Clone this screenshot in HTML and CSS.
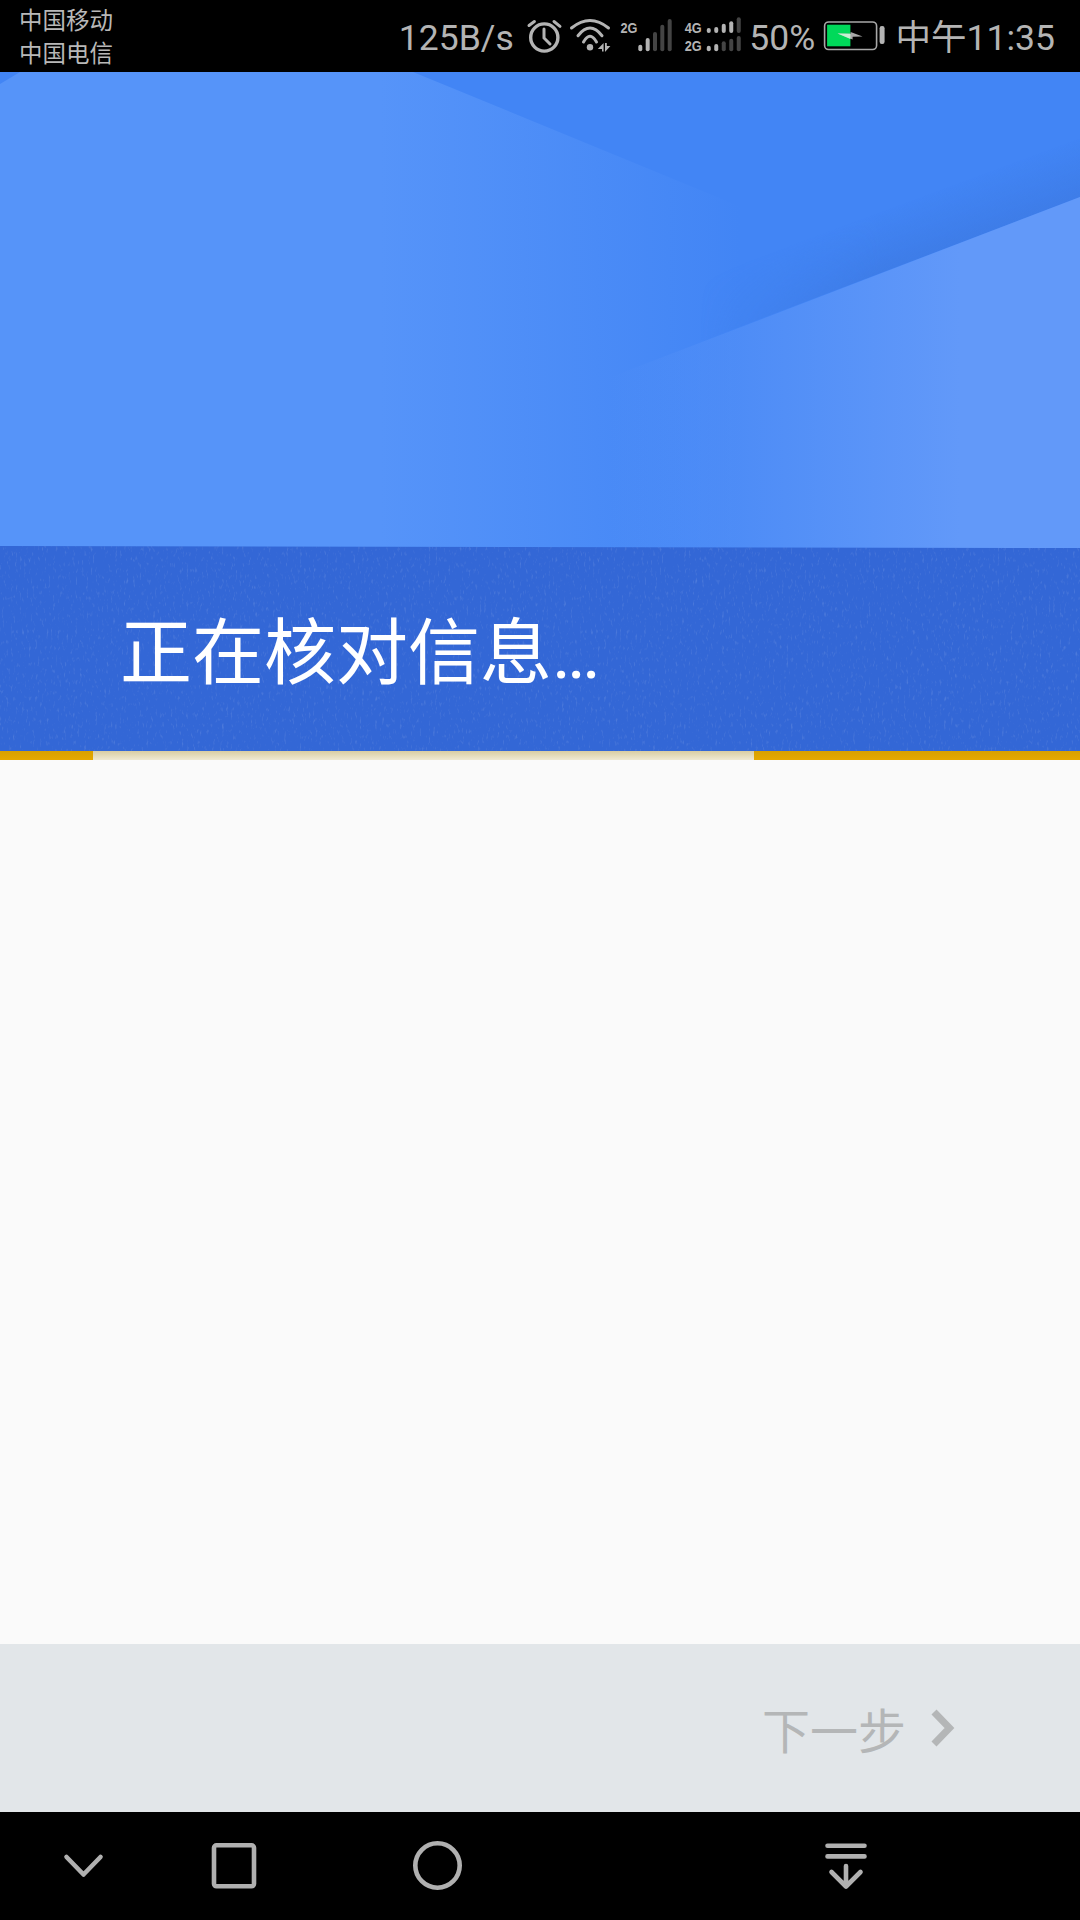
FILE: index.html
```html
<!DOCTYPE html>
<html lang="zh-CN">
<head>
<meta charset="utf-8">
<title>正在核对信息</title>
<link rel="stylesheet" href="styles.css">
</head>
<body>
<div class="screen">
  <header class="status">
    <div class="carriers">
      <span>中国移动</span>
      <span>中国电信</span>
    </div>
    <div class="status-right">
      <span class="status-text">125B/s</span>
      <svg class="ic-alarm" viewBox="517 8 51 56" aria-hidden="true">
        <circle cx="545.3" cy="37.5" r="13.6" class="line l34"/>
        <path d="M545 29v9l6 6" class="line l3"/>
        <path d="M530 25.5l5.4-4M555 21.5l6 4.8" class="line l3"/>
      </svg>
      <svg class="ic-wifi" viewBox="570 8 48 56" aria-hidden="true">
        <path d="M572.5 28Q591 13 609.5 28" class="line l3"/>
        <path d="M579 35.7Q591 20.5 603 35.7" class="line l3"/>
        <path d="M584.5 42Q591 30.5 597.5 42" class="line l3"/>
        <circle cx="591" cy="47.3" r="3.2" class="solid"/>
        <path d="M604.6 43v8.4h-1.6v-2.4h-4.2z" class="solid"/>
        <path d="M606 43h1.8v3h3.6l-5.4 6z" class="solid"/>
      </svg>
      <svg class="ic-sim1" viewBox="620 8 62 56" aria-hidden="true">
        <text x="621.5" y="33" class="net" textLength="17" lengthAdjust="spacingAndGlyphs">2G</text>
        <rect x="639.3" y="44.7" width="4" height="6.6" rx="2" class="solid"/>
        <rect x="646.7" y="38" width="4" height="13.3" rx="2" class="solid"/>
        <rect x="654" y="32" width="4" height="19.3" rx="2" class="off"/>
        <rect x="661.3" y="24.7" width="4" height="26.6" rx="2" class="off"/>
        <rect x="668.7" y="19" width="4" height="32.3" rx="2" class="off"/>
      </svg>
      <svg class="ic-sim2" viewBox="684 8 64 56" aria-hidden="true">
        <text x="685.5" y="33" class="net" textLength="17" lengthAdjust="spacingAndGlyphs">4G</text>
        <text x="685.5" y="50.6" class="net" textLength="17" lengthAdjust="spacingAndGlyphs">2G</text>
        <rect x="707.5" y="28" width="4" height="5" rx="2" class="solid"/>
        <rect x="715" y="27" width="4" height="6" rx="2" class="solid"/>
        <rect x="722.5" y="23.7" width="4" height="9.3" rx="2" class="solid"/>
        <rect x="730" y="21.3" width="4" height="11.7" rx="2" class="solid"/>
        <rect x="737.5" y="17.3" width="4" height="15.7" rx="2" class="off"/>
        <rect x="707.5" y="45.7" width="4" height="5.6" rx="2" class="solid"/>
        <rect x="715" y="44" width="4" height="7.3" rx="2" class="solid"/>
        <rect x="722.5" y="41.3" width="4" height="10" rx="2" class="off"/>
        <rect x="730" y="38.7" width="4" height="12.6" rx="2" class="off"/>
        <rect x="737.5" y="36" width="4" height="15.3" rx="2" class="off"/>
      </svg>
      <span class="status-text">50%</span>
      <svg class="ic-batt" viewBox="817.4 8 76.4 56" aria-hidden="true">
        <rect x="825" y="22" width="52" height="27.5" rx="4" class="batt-shell"/>
        <rect x="827.5" y="24.7" width="23.3" height="21.6" class="batt-fill"/>
        <path d="M838 33.5l13 0.2 0-1.7 12 4.4-10 0.3 0 2.8z" class="batt-bolt"/>
        <path d="M838 33.5l12.8 0.2 0 5.4z" class="batt-bolt-on"/>
        <rect x="880" y="26" width="5" height="18" rx="2.2" class="solid"/>
      </svg>
      <span class="status-text">中午11:35</span>
    </div>
  </header>

  <section class="hero">
    <svg class="hero-art" viewBox="0 0 1080 476" preserveAspectRatio="none" aria-hidden="true">
      <defs>
        <linearGradient id="leftFade" gradientUnits="userSpaceOnUse" x1="380" y1="0" x2="740" y2="0">
          <stop offset="0" stop-color="#5694f9"/>
          <stop offset="1" stop-color="#4285f5"/>
        </linearGradient>
        <linearGradient id="edgeShade" gradientUnits="userSpaceOnUse" x1="900" y1="194" x2="880" y2="140">
          <stop offset="0" stop-color="#3870d4" stop-opacity=".4"/>
          <stop offset="1" stop-color="#3870d4" stop-opacity="0"/>
        </linearGradient>
        <linearGradient id="shadeSpan" gradientUnits="userSpaceOnUse" x1="700" y1="0" x2="880" y2="0">
          <stop offset="0" stop-color="#000"/>
          <stop offset="1" stop-color="#fff"/>
        </linearGradient>
        <mask id="shadeMask" maskUnits="userSpaceOnUse" x="0" y="0" width="1080" height="476">
          <rect width="1080" height="476" fill="url(#shadeSpan)"/>
        </mask>
        <linearGradient id="rightFade" gradientUnits="userSpaceOnUse" x1="610" y1="0" x2="960" y2="0">
          <stop offset="0" stop-color="#6299f9" stop-opacity="0"/>
          <stop offset="1" stop-color="#6299f9"/>
        </linearGradient>
      </defs>
      <rect width="1080" height="476" fill="#4285f5"/>
      <polygon points="0,0 413,0 1080,274 1080,476 0,476" fill="url(#leftFade)"/>
      <polygon points="0,0 20,0 0,12" fill="#4285f5"/>
      <polygon points="700,270 1080,125 1080,0 700,0" fill="url(#edgeShade)" mask="url(#shadeMask)"/>
      <polygon points="540,332 1080,125 1080,476 540,476" fill="url(#rightFade)"/>
    </svg>
  </section>

  <section class="band">
    <svg class="grain" aria-hidden="true">
      <filter id="speck">
        <feTurbulence type="fractalNoise" baseFrequency="0.45 0.18" numOctaves="2" seed="4"/>
        <feColorMatrix values="0 0 0 0 1  0 0 0 0 1  0 0 0 0 1  0 0 0 2.4 -1.4"/>
      </filter>
      <rect width="100%" height="100%" filter="url(#speck)"/>
    </svg>
    <h1 class="title">正在核对信息<span class="dots">...</span></h1>
  </section>

  <div class="progress">
    <span class="seg-start"></span>
    <span class="seg-track"></span>
    <span class="seg-end"></span>
  </div>

  <main class="content"></main>

  <footer class="footer">
    <span class="next">下一步</span>
    <svg class="next-arrow" viewBox="926 1704 32 48" aria-hidden="true">
      <path d="M935 1712l15.5 16-15.5 16" class="next-stroke"/>
    </svg>
  </footer>

  <nav class="navbar">
    <svg class="nav-back" viewBox="63 1845 42 42" aria-hidden="true">
      <path d="M66.5 1857l17 17.5 17-17.5" class="nav-stroke"/>
    </svg>
    <svg class="nav-recent" viewBox="209 1841 50 50" aria-hidden="true">
      <rect x="214" y="1845.3" width="40" height="41" rx="2.5" class="nav-stroke"/>
    </svg>
    <svg class="nav-home" viewBox="411 1839 54 54" aria-hidden="true">
      <circle cx="437.5" cy="1865.5" r="22.2" class="nav-stroke"/>
    </svg>
    <svg class="nav-down" viewBox="824 1841 44 50" aria-hidden="true">
      <path d="M827.5 1845.7h37M827.5 1856.4h37M846 1866v20M831.5 1872l14.5 14.5 14.5-14.5" class="nav-stroke"/>
    </svg>
  </nav>
</div>
</body>
</html>
```
FILE: styles.css
```css
* { box-sizing: border-box; }
html, body { margin: 0; padding: 0; }
body {
  width: 1080px;
  height: 1920px;
  overflow: hidden;
  font-family: Roboto, "Noto Sans CJK SC", sans-serif;
}
.screen {
  width: 1080px;
  height: 1920px;
  display: flex;
  flex-direction: column;
  background: #fafafa;
}

/* status bar */
.status {
  height: 72px;
  flex: none;
  background: #000;
  display: flex;
  align-items: center;
  justify-content: space-between;
  padding: 0 25px 0 19px;
}
.carriers {
  display: flex;
  flex-direction: column;
  font-size: 23.5px;
  line-height: 33px;
  padding-top: 3px;
  color: #b8b8b8;
}
.status-right {
  display: flex;
  align-items: center;
  gap: 2px;
}
.status-text {
  font-size: 35.5px;
  line-height: 56px;
  padding-top: 4px;
  color: #b4b4b4;
  white-space: nowrap;
}
.status-right svg { height: 56px; flex: none; display: block; }
.ic-alarm { width: 51px; }
.ic-wifi { width: 48px; }
.ic-sim1 { width: 62px; }
.ic-sim2 { width: 64.5px; }
.ic-batt { width: 76.4px; }
.line { fill: none; stroke: #b4b4b4; stroke-linecap: round; }
.l3 { stroke-width: 3; }
.l34 { stroke-width: 3.4; }
.solid { fill: #b4b4b4; }
.off { fill: #444; }
.net {
  font-family: "Liberation Sans", sans-serif;
  font-weight: 700;
  font-size: 15px;
  fill: #b4b4b4;
}
.batt-shell { fill: none; stroke: #a8a8a8; stroke-width: 1.6; }
.batt-fill { fill: #00d95a; }
.batt-bolt { fill: #a8a8a8; }
.batt-bolt-on { fill: #c6f0d4; }

/* hero */
.hero {
  height: 476px;
  flex: none;
  display: flex;
}
.hero-art { width: 1080px; height: 476px; display: block; }

.band {
  position: relative;
  height: 205px;
  margin-top: -2px;
  flex: none;
  background: #3367d6;
  clip-path: polygon(0 0, 100% 2px, 100% 100%, 0 100%);
  padding: 49px 0 0 120px;
}
.grain {
  position: absolute;
  inset: 0;
  width: 100%;
  height: 100%;
  opacity: .16;
}
.title {
  position: relative;
  margin: 0;
  font-family: "Noto Sans CJK SC", sans-serif;
  font-weight: 400;
  font-size: 72px;
  line-height: 104px;
  color: #fff;
  white-space: nowrap;
}
.dots {
  font-family: Roboto, sans-serif;
  font-size: 72px;
  letter-spacing: -4px;
}

/* progress */
.progress {
  height: 9px;
  flex: none;
  display: flex;
}
.seg-start, .seg-end {
  background: linear-gradient(#d8a000, #e6a900);
}
.seg-start { width: 93px; }
.seg-end { flex: 1; }
.seg-track {
  width: 661px;
  background: linear-gradient(#d9cda2, #efe9d3);
}

.content { flex: 1; background: #fafafa; }

/* footer */
.footer {
  height: 168px;
  flex: none;
  background: #e2e6e9;
  display: flex;
  align-items: center;
  justify-content: flex-end;
  gap: 19px;
  padding-right: 123px;
}
.next {
  font-family: "Noto Sans CJK SC", sans-serif;
  font-size: 48px;
  line-height: 60px;
  color: #b4b6b7;
}
.next-arrow { width: 32px; height: 48px; display: block; }
.next-stroke { fill: none; stroke: #b4b6b7; stroke-width: 7; }

/* navigation */
.navbar {
  height: 108px;
  flex: none;
  background: #000;
  display: flex;
  align-items: center;
  padding-left: 63px;
}
.navbar svg { display: block; flex: none; }
.nav-back { width: 42px; height: 42px; }
.nav-recent { width: 50px; height: 50px; margin-left: 104px; }
.nav-home { width: 54px; height: 54px; margin-left: 152px; }
.nav-down { width: 44px; height: 50px; margin-left: 359px; }
.nav-stroke {
  fill: none;
  stroke: #b0b0b0;
  stroke-width: 4.6;
  stroke-linecap: round;
  stroke-linejoin: round;
}
```
